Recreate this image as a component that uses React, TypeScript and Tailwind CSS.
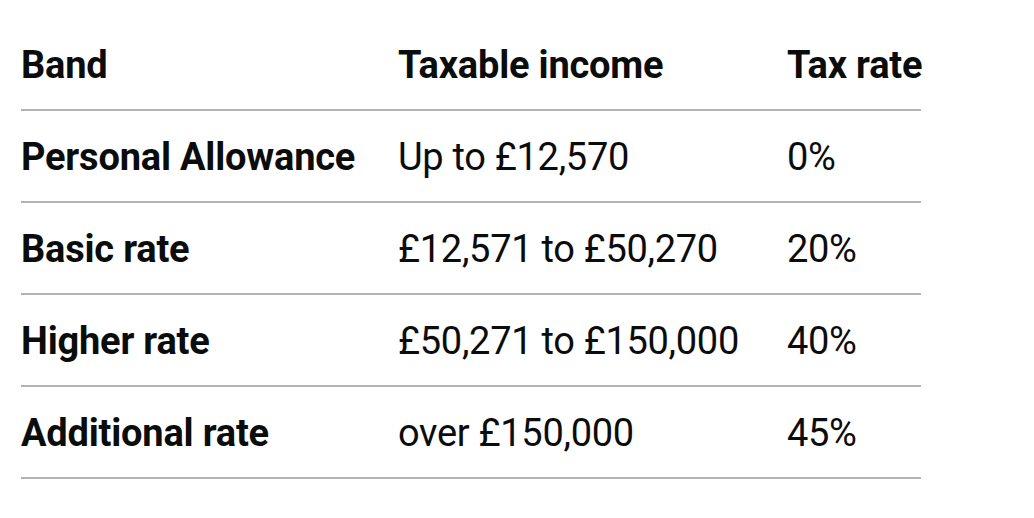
const rows = [
  { band: "Personal Allowance", income: "Up to £12,570", rate: "0%" },
  { band: "Basic rate", income: "£12,571 to £50,270", rate: "20%" },
  { band: "Higher rate", income: "£50,271 to £150,000", rate: "40%" },
  { band: "Additional rate", income: "over £150,000", rate: "45%" },
];

export default function App() {
  return (
    <div className="min-h-screen bg-white pl-[21px] pt-[19px] text-[#0b0c0c] font-['Roboto',sans-serif]">
      <table className="w-[900px] table-fixed border-collapse whitespace-nowrap text-left text-[38px] leading-[50px]">
        <colgroup>
          <col className="w-[377px]" />
          <col className="w-[389px]" />
          <col className="w-[134px]" />
        </colgroup>
        <thead>
          <tr className="border-b-2 border-[#b1b4b6]">
            <th className="pt-[21px] pb-[19px] pr-10 font-bold tracking-[-0.2px]">Band</th>
            <th className="pt-[21px] pb-[19px] pr-10 font-bold tracking-[-0.2px]">Taxable income</th>
            <th className="pt-[21px] pb-[19px] font-bold tracking-[-0.2px]">Tax rate</th>
          </tr>
        </thead>
        <tbody>
          {rows.map((r) => (
            <tr key={r.band} className="border-b-2 border-[#b1b4b6]">
              <th className="pt-[21px] pb-[19px] pr-10 font-bold tracking-[-0.2px]">{r.band}</th>
              <td className="pt-[21px] pb-[19px] pr-10 font-normal tracking-[-0.3px]">{r.income}</td>
              <td className="pt-[21px] pb-[19px] font-normal tracking-[-0.3px]">{r.rate}</td>
            </tr>
          ))}
        </tbody>
      </table>
    </div>
  );
}
